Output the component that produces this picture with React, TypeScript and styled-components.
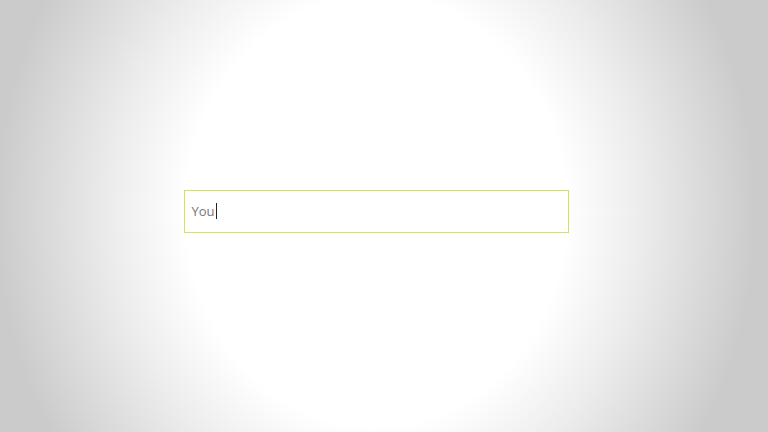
import styled, { createGlobalStyle } from 'styled-components';

const GlobalStyle = createGlobalStyle`
  html, body {
    margin: 0;
    padding: 0;
    height: 100%;
  }
  #root {
    height: 100%;
  }
`;

const Stage = styled.div`
  height: 100vh;
  box-sizing: border-box;
  padding-right: 16px;
  padding-bottom: 10px;
  display: grid;
  place-items: center;
  background: radial-gradient(
    ellipse 380px 430px at 376px 211px,
    #ffffff 0%,
    #ffffff 50%,
    #ececec 70%,
    #cbcbcb 100%
  ) #c4c4c4;
  font-family: 'Open Sans', 'Noto Sans', sans-serif;
`;

const Field = styled.div`
  width: 385px;
  height: 43px;
  box-sizing: border-box;
  border: 1px solid #c9dc8f;
  background: #ffffff;
  display: flex;
  align-items: center;
  padding: 0 7px;
  font-size: 13px;
  color: #777777;
`;

const Caret = styled.span`
  display: inline-block;
  width: 1px;
  height: 16px;
  margin-left: 1px;
  background: #222;
`;

export default function App() {
  return (
    <>
      <GlobalStyle />
      <Stage>
        <Field>
          You
          <Caret />
        </Field>
      </Stage>
    </>
  );
}
